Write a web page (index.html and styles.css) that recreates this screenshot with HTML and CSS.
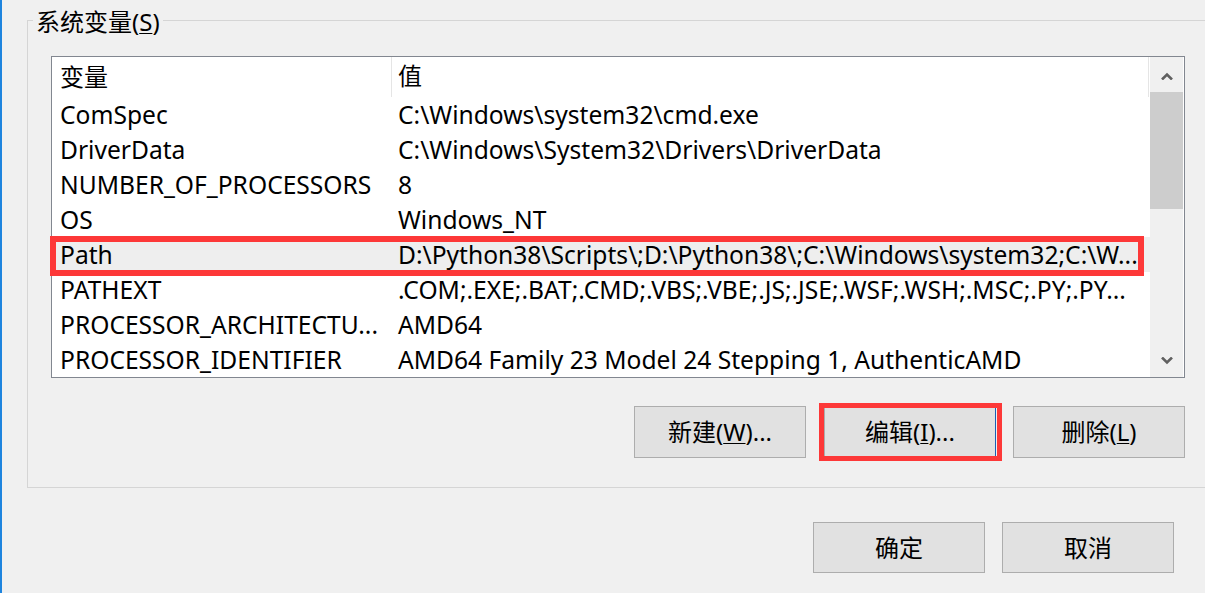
FILE: index.html
```html
<!DOCTYPE html>
<html lang="zh-CN">
<head>
<meta charset="utf-8">
<title>系统变量</title>
<link rel="stylesheet" href="styles.css">
</head>
<body>
<div class="window">
  <fieldset class="group">
    <legend class="group-title">系统变量(<u>S</u>)</legend>
    <div class="listbox">
      <div class="list">
        <div class="row head">
          <div class="c1">变量</div>
          <div class="c2">值</div>
        </div>
        <div class="row"><div class="c1">ComSpec</div><div class="c2">C:\Windows\system32\cmd.exe</div></div>
        <div class="row"><div class="c1">DriverData</div><div class="c2">C:\Windows\System32\Drivers\DriverData</div></div>
        <div class="row"><div class="c1">NUMBER_OF_PROCESSORS</div><div class="c2">8</div></div>
        <div class="row"><div class="c1">OS</div><div class="c2">Windows_NT</div></div>
        <div class="row sel"><div class="c1">Path</div><div class="c2">D:\Python38\Scripts\;D:\Python38\;C:\Windows\system32;C:\W...</div><span class="redbox row-box"></span></div>
        <div class="row"><div class="c1">PATHEXT</div><div class="c2">.COM;.EXE;.BAT;.CMD;.VBS;.VBE;.JS;.JSE;.WSF;.WSH;.MSC;.PY;.PY...</div></div>
        <div class="row"><div class="c1">PROCESSOR_ARCHITECTU...</div><div class="c2">AMD64</div></div>
        <div class="row"><div class="c1">PROCESSOR_IDENTIFIER</div><div class="c2">AMD64 Family 23 Model 24 Stepping 1, AuthenticAMD</div></div>
      </div>
      <div class="scrollbar">
        <div class="sb-btn sb-up">
          <svg width="12" height="8" viewBox="0 0 12 8"><polyline points="1,7.5 6,2.5 11,7.5" fill="none" stroke="#606060" stroke-width="2.6"/></svg>
        </div>
        <div class="sb-track"><div class="sb-thumb"></div></div>
        <div class="sb-btn sb-down">
          <svg width="12" height="8" viewBox="0 0 12 8"><polyline points="1,0.5 6,5.5 11,0.5" fill="none" stroke="#606060" stroke-width="2.6"/></svg>
        </div>
      </div>
    </div>
    <div class="group-buttons">
      <button class="btn">新建(<u>W</u>)...</button>
      <div class="annotated">
        <button class="btn btn-default">编辑(<u>I</u>)...</button>
        <span class="redbox btn-box"></span>
      </div>
      <button class="btn btn-last">删除(<u>L</u>)</button>
    </div>
  </fieldset>
  <div class="dialog-buttons">
    <button class="btn btn-dlg">确定</button>
    <button class="btn btn-dlg">取消</button>
  </div>
</div>
</body>
</html>
```
FILE: styles.css
```css
html, body {
  margin: 0;
  padding: 0;
}

body {
  width: 1205px;
  height: 593px;
  overflow: hidden;
  background: #f0f0f0;
  color: #000;
  font-family: "Noto Sans", "Noto Sans CJK SC", sans-serif;
  font-size: 24px;
}

.window {
  height: 593px;
  box-sizing: border-box;
  border-left: 2px solid #1e84de;
  padding-top: 3px;
  overflow: hidden;
}

/* group box */
.group {
  margin: 0 0 0 25px;
  padding: 19px 0 29px 23px;
  border: 1px solid #d5d5d5;
  width: 1200px;
  min-width: 0;
}

.group-title {
  margin-left: -18px;
  padding: 4px 3px 0;
  line-height: 30px;
  font-size: 24px;
}

u {
  text-decoration: underline;
  text-decoration-thickness: 1px;
  text-underline-offset: 2px;
}

/* list view */
.listbox {
  width: 1132px;
  height: 320px;
  border: 1px solid #828790;
  background: #fff;
  display: flex;
}

.list {
  width: 1098px;
  display: flex;
  flex-direction: column;
}

.row {
  position: relative;
  display: flex;
  height: 35px;
  line-height: 35px;
  white-space: nowrap;
  font-size: 24.6px;
}

.row.head {
  height: 40px;
  line-height: 40px;
  font-size: 24px;
}

.c1 {
  width: 331px;
  padding-left: 8px;
  overflow: hidden;
}

.c2 {
  flex: 1;
  padding-left: 7px;
  overflow: hidden;
}

.head .c2 {
  padding-left: 6px;
  border-left: 1px solid #e5e5e5;
  border-right: 1px solid #e5e5e5;
  margin-right: 1px;
  line-height: 38px;
}

.head .c1 {
  line-height: 40px;
}

.row.sel {
  background: #eeeeee;
}

.redbox {
  position: absolute;
  box-sizing: border-box;
  border: 6px solid #fd3838;
  pointer-events: none;
}

.row-box {
  left: -2px;
  top: -1px;
  width: 1094px;
  height: 40px;
}

/* scrollbar */
.scrollbar {
  width: 33px;
  margin-right: 1px;
  background: #f0f0f0;
  display: flex;
  flex-direction: column;
}

.sb-btn {
  display: flex;
  align-items: center;
  justify-content: center;
}

.sb-up {
  height: 35px;
  padding-top: 2px;
  box-sizing: border-box;
}

.sb-down {
  height: 34px;
  padding-top: 2px;
  box-sizing: border-box;
}

.sb-track {
  flex: 1;
}

.sb-thumb {
  height: 117px;
  background: #cdcdcd;
}

/* buttons */
.btn {
  width: 172px;
  height: 52px;
  padding: 0;
  margin: 0;
  border: 1px solid #adadad;
  background: #e1e1e1;
  color: #000;
  font-family: inherit;
  font-size: 24px;
  line-height: 1;
}

.btn-default {
  border-color: #adadad #1a5fb4 #adadad #adadad;
}

.group-buttons {
  width: 1134px;
  margin-top: 28px;
  display: flex;
  justify-content: flex-end;
  gap: 18px;
}

.btn-last {
  margin-left: -1px;
}

.annotated {
  position: relative;
  display: flex;
}

.btn-box {
  left: -5px;
  top: -3px;
  right: -6px;
  bottom: -3px;
  border-width: 5px;
}

.dialog-buttons {
  margin-top: 34px;
  padding-right: 31px;
  display: flex;
  justify-content: flex-end;
  gap: 17px;
}

.btn-dlg {
  height: 51px;
}
```
